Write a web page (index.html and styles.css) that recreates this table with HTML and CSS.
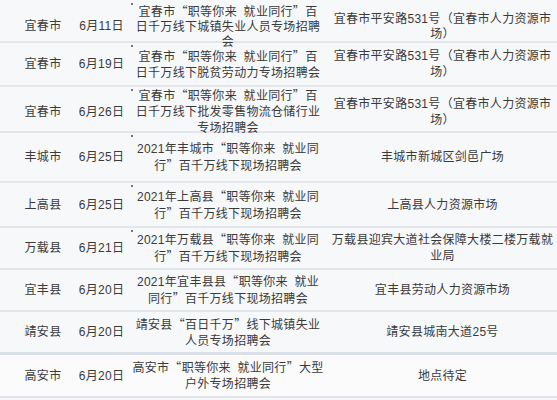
FILE: index.html
```html
<!DOCTYPE html>
<html lang="zh-CN">
<head>
<meta charset="utf-8">
<title>招聘会安排</title>
<link rel="stylesheet" href="styles.css">
</head>
<body>
<div class="table">
  <div class="row r1">
    <div class="cell city">宜春市</div>
    <div class="cell date">6月11日</div>
    <div class="cell name"><span class="mark"></span><div class="txt">宜春市<span class="q">“</span>职等你来 就业同行<span class="q">”</span>百<br>日千万线下城镇失业人员专场招聘<br>会</div></div>
    <div class="cell place"><div class="txt">宜春市平安路531号（宜春市人力资源市<br>场）</div></div>
  </div>
  <div class="row r2">
    <div class="cell city">宜春市</div>
    <div class="cell date">6月19日</div>
    <div class="cell name"><span class="mark"></span><div class="txt">宜春市<span class="q">“</span>职等你来 就业同行<span class="q">”</span>百<br>日千万线下脱贫劳动力专场招聘会</div></div>
    <div class="cell place"><div class="txt">宜春市平安路531号（宜春市人力资源市<br>场）</div></div>
  </div>
  <div class="row r3">
    <div class="cell city">宜春市</div>
    <div class="cell date">6月26日</div>
    <div class="cell name"><span class="mark"></span><div class="txt">宜春市<span class="q">“</span>职等你来 就业同行<span class="q">”</span>百<br>日千万线下批发零售物流仓储行业<br>专场招聘会</div></div>
    <div class="cell place"><div class="txt">宜春市平安路531号（宜春市人力资源市<br>场）</div></div>
  </div>
  <div class="row r4">
    <div class="cell city">丰城市</div>
    <div class="cell date">6月25日</div>
    <div class="cell name"><span class="mark"></span><div class="txt">2021年丰城市<span class="q">“</span>职等你来 就业同<br>行<span class="q">”</span>百千万线下现场招聘会</div></div>
    <div class="cell place"><div class="txt">丰城市新城区剑邑广场</div></div>
  </div>
  <div class="row r5">
    <div class="cell city">上高县</div>
    <div class="cell date">6月25日</div>
    <div class="cell name"><span class="mark"></span><div class="txt">2021年上高县<span class="q">“</span>职等你来 就业同<br>行<span class="q">”</span>百千万线下现场招聘会</div></div>
    <div class="cell place"><div class="txt">上高县人力资源市场</div></div>
  </div>
  <div class="row r6">
    <div class="cell city">万载县</div>
    <div class="cell date">6月21日</div>
    <div class="cell name"><span class="mark"></span><div class="txt">2021年万载县<span class="q">“</span>职等你来 就业同<br>行<span class="q">”</span>百千万线下现场招聘会</div></div>
    <div class="cell place"><div class="txt">万载县迎宾大道社会保障大楼二楼万载就<br>业局</div></div>
  </div>
  <div class="row r7">
    <div class="cell city">宜丰县</div>
    <div class="cell date">6月20日</div>
    <div class="cell name"><div class="txt">2021年宜丰县县<span class="q">“</span>职等你来 就业<br>同行<span class="q">”</span>百千万线下现场招聘会</div></div>
    <div class="cell place"><div class="txt">宜丰县劳动人力资源市场</div></div>
  </div>
  <div class="row r8">
    <div class="cell city">靖安县</div>
    <div class="cell date">6月20日</div>
    <div class="cell name"><div class="txt">靖安县<span class="q">“</span>百日千万<span class="q">”</span>线下城镇失业<br>人员专场招聘会</div></div>
    <div class="cell place"><div class="txt">靖安县城南大道25号</div></div>
  </div>
  <div class="row r9">
    <div class="cell city">高安市</div>
    <div class="cell date">6月20日</div>
    <div class="cell name"><div class="txt">高安市<span class="q">“</span>职等你来 就业同行<span class="q">”</span>大型<br>户外专场招聘会</div></div>
    <div class="cell place"><div class="txt">地点待定</div></div>
  </div>
</div>
</body>
</html>
```

FILE: styles.css
```css
html, body {
  margin: 0;
  padding: 0;
  background: #f7f8fa;
}

body {
  width: 557px;
  height: 400px;
  overflow: hidden;
  font-family: "Liberation Sans", "Noto Sans CJK SC", sans-serif;
  font-size: 12px;
  letter-spacing: 0.3px;
  word-spacing: 3px;
  color: #3a3a3a;
}

.table {
  display: flex;
  flex-direction: column;
}

.row {
  display: grid;
  grid-template-columns: 73px 57px 196px 231px;
  border-bottom: 2px solid #e3e7ec;
  box-sizing: border-box;
}

.r1 { height: 43px; padding-top: 3px; }
.r2 { height: 44px; }
.r3 { height: 46px; }
.r4 { height: 50px; }
.r5 { height: 45px; }
.r6 { height: 42px; }
.r7 { height: 42px; }
.r8 { height: 43px; border-bottom: 3px solid #d8dfe8; }
.r9 { height: 43px; background: #fbfbfc; border-bottom: 2px solid #e0e3e7; }

.cell {
  display: flex;
  align-items: center;
  justify-content: center;
  text-align: center;
  line-height: 16px;
  white-space: nowrap;
}

.r1 .cell { line-height: 15px; }

.txt {
  text-align: center;
}

.city { padding-left: 13px; }

.name {
  position: relative;
}

.place {
  padding-left: 2px;
}

.q {
  font-family: "Noto Sans CJK SC", sans-serif;
}

.mark {
  position: absolute;
  left: 1px;
  top: 2px;
  width: 2px;
  height: 2px;
  background: #4a4a4a;
  border-radius: 1px;
}

.r1 .mark { top: 0; }
```
